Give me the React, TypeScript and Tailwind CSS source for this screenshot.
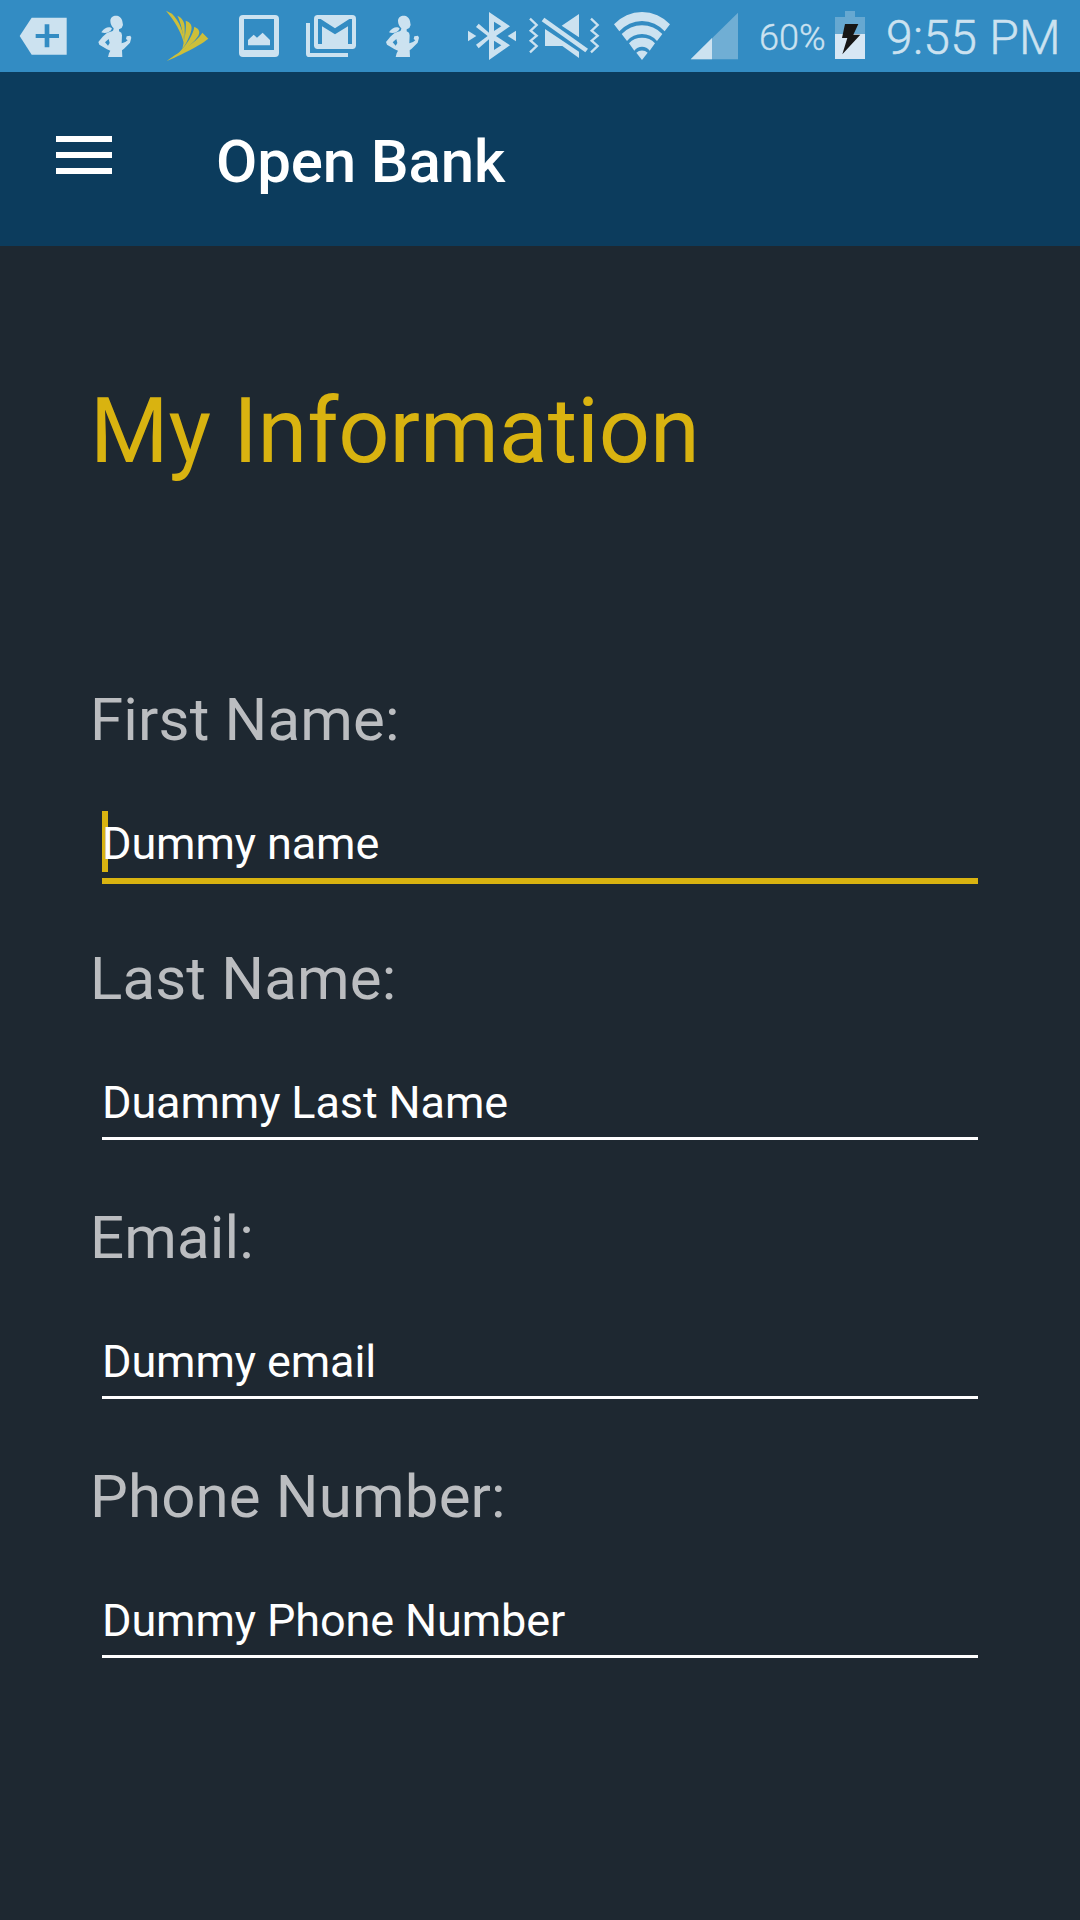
import type { ReactNode } from "react";

const BLUE = "#338cc3";
const PALE = "#cce2f0";

/** Status bar glyph on a triple-density grid, 216 units high. */
function Glyph({ x, w, children }: { x: number; w: number; children: ReactNode }) {
  return (
    <svg className="shrink-0" width={w / 3} height={72} viewBox={`${x} 0 ${w} 216`} fill={PALE}>
      {children}
    </svg>
  );
}

function Runner({ x, w }: { x: number; w: number }) {
  return (
    <Glyph x={x} w={w}>
      <path
        fillRule="evenodd"
        d="M331 63C331 42 364 41 367 64L369 75L365 84L357 88V94L364 98L366 106L365 130L376 126L383 121L378 117L380 109L391 107L394 113L390 128L372 146L366 151L367 171H324L327 160L331 152L321 148L298 134L295 126L308 110L318 101C325 95 337 96 340 90L341 85C336 80 331 72 331 63ZM326 117L315 127L324 137L329 129Z"
      />
      <path d="M336 86C330 78 314 81 304 97C316 101 329 98 336 86Z" />
    </Glyph>
  );
}

function StatusBar() {
  return (
    <div className="flex h-[72px] bg-[#338cc3] text-[#cce2f0]">
      <Glyph x={0} w={240}>
        <path d="M59 108L95 53H200V164H95Z" />
        <path fill={BLUE} d="M134 73H148V102H177V114H148V142H134V114H107V102H134Z" />
      </Glyph>
      <Runner x={240} w={210} />
      <Glyph x={450} w={210}>
        <g fill="#cdbf3a">
          <path d="M498 32L516 41C538 64 552 94 553 134C543 92 524 64 498 32Z" />
          <path d="M532 47C548 54 554 67 554 84L554 136C549 98 543 69 532 47Z" />
          <path d="M557 62C573 67 577 78 574 91C569 110 559 132 547 146C554 117 560 85 557 62Z" />
          <path d="M583 80C598 87 601 95 595 107C583 126 561 145 534 161C562 131 579 105 583 80Z" />
          <path d="M607 98L625 116C610 129 560 158 500 183C527 161 588 130 607 98Z" />
        </g>
      </Glyph>
      <Glyph x={0} w={210}>
        <path
          fillRule="evenodd"
          d="M69 45H165Q177 45 177 57V159Q177 171 165 171H69Q57 171 57 159V57Q57 45 69 45ZM72 57V150H162V57Z"
        />
        <path d="M84 136V120L101 104L111 113L128 98L150 120V136Z" />
      </Glyph>
      <Glyph x={210} w={240}>
        <path d="M258 69H270V159H384V171H268Q258 171 258 161Z" />
        <rect x={282} y={45} width={126} height={102} rx={11} />
        <path fill={BLUE} d="M294 57H302L345 85L388 57H396V132H384V79L345 103L306 79V132H294Z" />
      </Glyph>
      <Runner x={247} w={240} />
      <Glyph x={0} w={216}>
        <path
          fillRule="evenodd"
          d="M117 36L180 79L138 108L180 136L117 180V118L86 145L78 134L113 108L78 81L86 71L117 98ZM132 65V93L154 79ZM132 122V150L154 136Z"
        />
        <path d="M54 92L79 108L54 124ZM198 92L173 108L198 124Z" />
      </Glyph>
      <Glyph x={216} w={234}>
        <path d="M335 77L387 42V112ZM285 87L387 155V174L337 138H285Z" />
        <path d="M283 53L414 146L406 157L275 64Z" />
        <g fill="none" stroke={PALE} strokeWidth={7}>
          <path d="M240 56L260 75L242 92L260 107L242 122L260 138L240 157" />
          <path d="M423 56L443 75L425 92L443 107L425 122L443 138L423 157" />
        </g>
      </Glyph>
      <Glyph x={0} w={240}>
        <path d="M42 73A114 114 0 0 1 210 73L194 94A90 90 0 0 0 58 94Z" />
        <path d="M65 102A84 84 0 0 1 187 102L171 123A59 59 0 0 0 81 123Z" />
        <path d="M87 130A53 53 0 0 1 165 130L149 152A28 28 0 0 0 103 152Z" />
        <path d="M109 158A25 25 0 0 1 143 158L126 180Z" />
      </Glyph>
      <Glyph x={240} w={180}>
        <path fill="#70aed4" d="M272 178L414 38V178Z" />
        <path d="M272 178L336 114V178Z" />
      </Glyph>
      <div className="w-[90px] shrink-0 pl-[19px] pt-[17px] text-[36px] font-light leading-[42px] [-webkit-text-stroke:0.4px_#cce2f0]">
        60%
      </div>
      <Glyph x={270} w={120}>
        <path fill="#66a8d1" d="M315 33H345V51H375V102H285V51H315Z" />
        <rect x={285} y={102} width={90} height={75} fill="#d7e7f4" />
        <path fill="#161616" d="M315 72H355L340 104H361L307 163L322 114H306Z" />
      </Glyph>
      <div className="shrink-0 whitespace-nowrap pl-[16px] pt-[10px] text-[48px] font-light leading-[56px] tracking-[0.3px] [-webkit-text-stroke:0.5px_#cce2f0]">
        9:55 PM
      </div>
    </div>
  );
}

function Field({ label, value, focused = false }: { label: string; value: string; focused?: boolean }) {
  return (
    <div className="h-[259px]">
      <label className="relative top-px block text-[60px] leading-[70px] tracking-[0.15px] text-[#bbbdc0]">
        {label}
      </label>
      <div
        className={
          focused
            ? "relative mx-[12px] mt-[57px] h-[73px] border-b-[6px] border-[#d9b310]"
            : "relative mx-[12px] mt-[57px] h-[70px] border-b-[3px] border-white"
        }
      >
        {focused && <span className="absolute left-0 top-0 h-[61px] w-[6px] bg-[#d9b310]" />}
        <div className="relative pt-[6px] text-[45px] leading-[53px] tracking-[-0.12px] text-white">{value}</div>
      </div>
    </div>
  );
}

export default function App() {
  return (
    <div className="h-[1920px] w-[1080px] overflow-hidden bg-[#1e2831] font-['Roboto',sans-serif]">
      <StatusBar />
      <header className="flex h-[174px] bg-[#0c3c5d] text-white">
        <button className="ml-[56px] mt-[64px] flex h-[38px] w-[56px] flex-col justify-between" aria-label="Menu">
          <span className="h-[6px] w-full bg-white" />
          <span className="h-[6px] w-full bg-white" />
          <span className="h-[6px] w-full bg-white" />
        </button>
        <div className="ml-[104px] mt-[55px] text-[60px] font-medium leading-[70px] tracking-[-0.15px]">
          Open Bank
        </div>
      </header>
      <main className="px-[90px] pt-[133px]">
        <h1 className="mb-[200px] text-[90px] leading-[105px] tracking-[-0.1px] text-[#d9b310]">My Information</h1>
        <Field label="First Name:" value="Dummy name" focused />
        <Field label="Last Name:" value="Duammy Last Name" />
        <Field label="Email:" value="Dummy email" />
        <Field label="Phone Number:" value="Dummy Phone Number" />
      </main>
    </div>
  );
}
